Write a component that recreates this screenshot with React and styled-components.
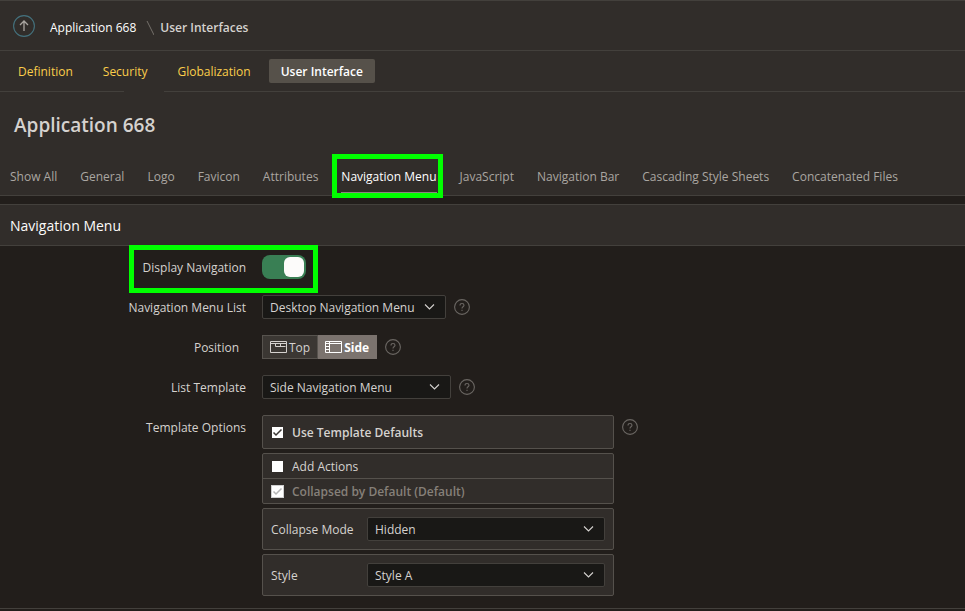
import React from "react";
import styled, { createGlobalStyle, css } from "styled-components";

const c = {
  page: "#221e1b",
  surface: "#312d2a",
  line: "#43403c",
  frame: "#55514c",
  text: "#d5d2cf",
  muted: "#aaa6a1",
  white: "#fcfbfa",
  link: "#fbce4a",
  highlight: "#00ff00",
};

const Global = createGlobalStyle`
  *, *::before, *::after { box-sizing: border-box; }
  body {
    margin: 0;
    background: ${c.page};
    color: ${c.text};
    font: 12px/16px "Open Sans", "Noto Sans", sans-serif;
  }
  button, select, input { font: inherit; }
`;

const Page = styled.div`
  display: flex;
  flex-direction: column;
`;

const Header = styled.header`
  display: flex;
  align-items: center;
  min-height: 51px;
  padding: 0 13px;
  background: ${c.surface};
  border-top: 1px solid ${c.line};
  border-bottom: 1px solid ${c.line};
`;

const UpButton = styled.button`
  display: flex;
  padding: 0;
  border: 0;
  background: none;
  color: ${c.muted};
`;

const Crumbs = styled.nav`
  display: flex;
  align-items: center;
  gap: 6px;
  margin-left: 15px;
  padding-top: 4px;
`;

const CrumbLink = styled.a`
  color: #ffffff;
  font-weight: 500;
  text-decoration: none;
`;

const CrumbCurrent = styled.span`
  color: ${c.text};
  font-weight: 600;
`;

const SubNav = styled.nav`
  display: flex;
  align-items: center;
  gap: 6px;
  min-height: 40px;
  padding: 0 6px;
  background: ${c.surface};
`;

const SubNavLink = styled.a`
  padding: 5px 12px 3px;
  border-radius: 2px;
  color: ${(p) => (p.$active ? "#ffffff" : c.link)};
  background: ${(p) => (p.$active ? "#56514a" : "transparent")};
  font-weight: ${(p) => (p.$active ? 600 : 400)};
  text-decoration: none;
`;

const Divider = styled.div`
  display: grid;
  grid-template-columns: 124px 1fr;
  column-gap: 40px;
  background: ${c.surface};
`;

const DividerLine = styled.span`
  height: 1px;
  background: ${c.line};
`;

const Title = styled.h1`
  margin: 0;
  padding: 21px 14px 20px;
  background: ${c.surface};
  font-size: 19px;
  line-height: 24px;
  font-weight: 600;
`;

const Tabs = styled.nav`
  display: flex;
  gap: 23px;
  height: 39px;
  padding: 0 10px;
  background: ${c.surface};
  border-bottom: 1px solid ${c.line};
`;

const Tab = styled.a`
  position: relative;
  padding: 12px 0 7px;
  color: ${(p) => (p.$active ? "#ffffff" : c.muted)};
  white-space: nowrap;
  text-decoration: none;
  ${(p) =>
    p.$active &&
    css`
      border-bottom: 3px solid #8b8580;
      &::after {
        content: "";
        position: absolute;
        inset: -3px -6px -6px -9px;
        border: 5px solid ${c.highlight};
      }
    `}
`;

const Region = styled.section`
  margin-top: 8px;
  border-top: 1px solid ${c.line};
  border-bottom: 1px solid ${c.line};
`;

const RegionTitle = styled.h2`
  margin: 0;
  padding: 11px 10px 9px;
  background: ${c.surface};
  border-bottom: 1px solid ${c.line};
  color: ${c.white};
  font-size: 14px;
  line-height: 20px;
  font-weight: 400;
`;

const Form = styled.form`
  display: flex;
  flex-direction: column;
  gap: 16px;
  padding: 9px 0 12px;
`;

const Field = styled.div`
  display: grid;
  grid-template-columns: 246px 1fr;
  column-gap: 16px;
  position: relative;
`;

const Callout = styled.span`
  position: absolute;
  left: 129px;
  width: 189px;
  top: -10px;
  bottom: -14px;
  border: 5px solid ${c.highlight};
  pointer-events: none;
`;

const Label = styled.label`
  padding: 5px ${(p) => (p.$inset ? "7px" : "0")} 3px 0;
  text-align: right;
`;

const Controls = styled.div`
  display: flex;
  align-items: flex-start;
  gap: 8px;
`;

const Switch = styled.input`
  appearance: none;
  width: 44px;
  height: 24px;
  margin: 0;
  padding: 2px;
  border-radius: 8px;
  background: #397f54;
  &::before {
    content: "";
    display: block;
    width: 20px;
    height: 20px;
    border-radius: 6px;
    background: ${c.white};
  }
  &:checked::before {
    margin-left: auto;
  }
`;

const SelectBox = styled.span`
  display: grid;
  align-items: center;
  width: ${(p) => p.$width || "100%"};
  > * {
    grid-area: 1 / 1;
  }
  > svg {
    justify-self: end;
    margin-right: 10px;
    pointer-events: none;
  }
`;

const NativeSelect = styled.select`
  appearance: none;
  width: 100%;
  height: 24px;
  padding: 2px 28px 0 7px;
  border: 1px solid ${c.line};
  border-radius: 2px;
  background: #191816;
  color: ${c.text};
`;

const HelpButton = styled.button`
  display: flex;
  padding: 4px 0;
  border: 0;
  background: none;
  color: #6b6763;
`;

const Segments = styled.div`
  display: flex;
`;

const Segment = styled.label`
  display: flex;
  align-items: center;
  gap: 2px;
  height: 24px;
  padding: 0 7px;
  border: 1px solid #57534e;
  background: #3b3733;
  & + & {
    border-left: 0;
  }
  &:has(:checked) {
    border-color: #7b736e;
    background: #7b736e;
    color: #ffffff;
    font-weight: 700;
  }
`;

const SegmentText = styled.span`
  padding-top: 2px;
`;

const HiddenRadio = styled.input`
  appearance: none;
  position: absolute;
  margin: 0;
  opacity: 0;
`;

const Options = styled.div`
  display: flex;
  flex-direction: column;
  gap: 4px;
  width: 352px;
`;

const Panel = styled.div`
  border: 1px solid ${c.frame};
  border-radius: 2px;
  background: ${c.surface};
`;

const CheckRow = styled.label`
  display: flex;
  align-items: center;
  gap: 8px;
  height: ${(p) => (p.$roomy ? "32px" : "24px")};
  padding: 0 8px;
  color: ${(p) => (p.$disabled ? "#868079" : c.text)};
  font-weight: ${(p) => (p.$strong ? 600 : 400)};
`;

const CheckText = styled.span`
  padding-top: 2px;
`;

const CheckSeparator = styled.div`
  height: 1px;
  background: ${c.frame};
`;

const CheckMark = styled.span`
  display: grid;
  > * {
    grid-area: 1 / 1;
  }
  > svg {
    pointer-events: none;
  }
`;

const CheckInput = styled.input`
  appearance: none;
  width: 13px;
  height: 13px;
  margin: 0;
  border: 1px solid ${c.surface};
  background: #ffffff;
  &:disabled {
    border-color: #cfcfcf;
  }
  & + svg {
    visibility: hidden;
  }
  &:checked + svg {
    visibility: visible;
  }
`;

const OptionRow = styled.div`
  display: grid;
  grid-template-columns: 96px 1fr;
  align-items: center;
  padding: 8px;
`;

const OptionLabel = styled.label`
  padding-top: 2px;
`;

const Chevron = () => (
  <svg width="12" height="12" viewBox="0 0 12 12" fill="none" stroke="#d5d2cf" strokeWidth="1.1" aria-hidden="true">
    <path d="M1 3.500l4.500 4.500L10 3.500" />
  </svg>
);

const Help = ({ topic }) => (
  <HelpButton type="button" aria-label={`Help: ${topic}`}>
    <svg width="16" height="16" viewBox="0 0 16 16" fill="none" stroke="currentColor" strokeWidth="1.1">
      <circle cx="8" cy="8" r="7.4" />
      <path d="M6 6.4c0-1.2.8-1.9 2-1.9s2 .7 2 1.8c0 1.500-2 1.500-2 3.100" />
      <path d="M8 10.700v1.200" />
    </svg>
  </HelpButton>
);

const UpIcon = () => (
  <svg width="22" height="22" viewBox="0 0 22 22" fill="none" aria-hidden="true">
    <circle cx="11" cy="11" r="10.400" stroke="#44717d" strokeWidth="1.1" />
    <path d="M11 16V6.500M7 10l4-4 4 4" stroke="currentColor" strokeWidth="1.300" />
  </svg>
);

const Slash = () => (
  <svg width="12" height="16" viewBox="0 0 12 16" fill="none" stroke="#75706b" aria-hidden="true">
    <path d="M5 1l7 14" />
  </svg>
);

const TopIcon = () => (
  <svg width="17" height="13" viewBox="0 0 17 13" fill="none" stroke="currentColor" aria-hidden="true">
    <path d="M.5.5h16v11H.5zM.5 2.500h16M5.500 2.500v3h10M10.500 2.500v3" />
  </svg>
);

const SideIcon = () => (
  <svg width="17" height="13" viewBox="0 0 17 13" fill="none" stroke="currentColor" aria-hidden="true">
    <path d="M.5.5h16v11H.5zM4.500.5v11M.5 2.500h16M.5 5.500h4M.5 8.500h4" />
  </svg>
);

const Select = ({ id, width, value }) => (
  <SelectBox $width={width}>
    <NativeSelect id={id} defaultValue={value}>
      <option>{value}</option>
    </NativeSelect>
    <Chevron />
  </SelectBox>
);

const Check = ({ children, checked, disabled, strong, roomy }) => (
  <CheckRow $disabled={disabled} $strong={strong} $roomy={roomy}>
    <CheckMark>
      <CheckInput type="checkbox" defaultChecked={checked} disabled={disabled} />
      <svg width="13" height="13" viewBox="0 0 13 13" fill="none" stroke={disabled ? "#b5b5b5" : "#3c3835"} strokeWidth="1.500">
        <path d="M2.500 6.500 5 9l5.500-5.500" />
      </svg>
    </CheckMark>
    <CheckText>{children}</CheckText>
  </CheckRow>
);

const TABS = [
  "Show All",
  "General",
  "Logo",
  "Favicon",
  "Attributes",
  "Navigation Menu",
  "JavaScript",
  "Navigation Bar",
  "Cascading Style Sheets",
  "Concatenated Files",
];

const SECTIONS = ["Definition", "Security", "Globalization", "User Interface"];

export default function App() {
  return (
    <Page>
      <Global />
      <Header>
        <UpButton aria-label="Up">
          <UpIcon />
        </UpButton>
        <Crumbs>
          <CrumbLink href="#app">Application 668</CrumbLink>
          <Slash />
          <CrumbCurrent>User Interfaces</CrumbCurrent>
        </Crumbs>
      </Header>
      <SubNav>
        {SECTIONS.map((name) => (
          <SubNavLink key={name} href="#section" $active={name === "User Interface"}>
            {name}
          </SubNavLink>
        ))}
      </SubNav>
      <Divider>
        <DividerLine />
        <DividerLine />
      </Divider>
      <Title>Application 668</Title>
      <Tabs>
        {TABS.map((name) => (
          <Tab key={name} href="#tab" $active={name === "Navigation Menu"}>
            {name}
          </Tab>
        ))}
      </Tabs>
      <Region>
        <RegionTitle>Navigation Menu</RegionTitle>
        <Form>
          <Field>
            <Label htmlFor="display">Display Navigation</Label>
            <Controls>
              <Switch id="display" type="checkbox" role="switch" defaultChecked />
            </Controls>
            <Callout />
          </Field>
          <Field>
            <Label htmlFor="list">Navigation Menu List</Label>
            <Controls>
              <Select id="list" width="184px" value="Desktop Navigation Menu" />
              <Help topic="Navigation Menu List" />
            </Controls>
          </Field>
          <Field>
            <Label as="span" id="position" $inset>
              Position
            </Label>
            <Controls>
              <Segments role="radiogroup" aria-labelledby="position">
                <Segment>
                  <HiddenRadio type="radio" name="position" />
                  <TopIcon />
                  <SegmentText>Top</SegmentText>
                </Segment>
                <Segment>
                  <HiddenRadio type="radio" name="position" defaultChecked />
                  <SideIcon />
                  <SegmentText>Side</SegmentText>
                </Segment>
              </Segments>
              <Help topic="Position" />
            </Controls>
          </Field>
          <Field>
            <Label htmlFor="template">List Template</Label>
            <Controls>
              <Select id="template" width="189px" value="Side Navigation Menu" />
              <Help topic="List Template" />
            </Controls>
          </Field>
          <Field>
            <Label as="span" id="options">
              Template Options
            </Label>
            <Controls>
              <Options role="group" aria-labelledby="options">
                <Panel>
                  <Check checked strong roomy>
                    Use Template Defaults
                  </Check>
                </Panel>
                <Panel>
                  <Check>Add Actions</Check>
                  <CheckSeparator />
                  <Check checked disabled strong>
                    Collapsed by Default (Default)
                  </Check>
                </Panel>
                <Panel>
                  <OptionRow>
                    <OptionLabel htmlFor="mode">Collapse Mode</OptionLabel>
                    <Select id="mode" value="Hidden" />
                  </OptionRow>
                </Panel>
                <Panel>
                  <OptionRow>
                    <OptionLabel htmlFor="style">Style</OptionLabel>
                    <Select id="style" value="Style A" />
                  </OptionRow>
                </Panel>
              </Options>
              <Help topic="Template Options" />
            </Controls>
          </Field>
        </Form>
      </Region>
    </Page>
  );
}
